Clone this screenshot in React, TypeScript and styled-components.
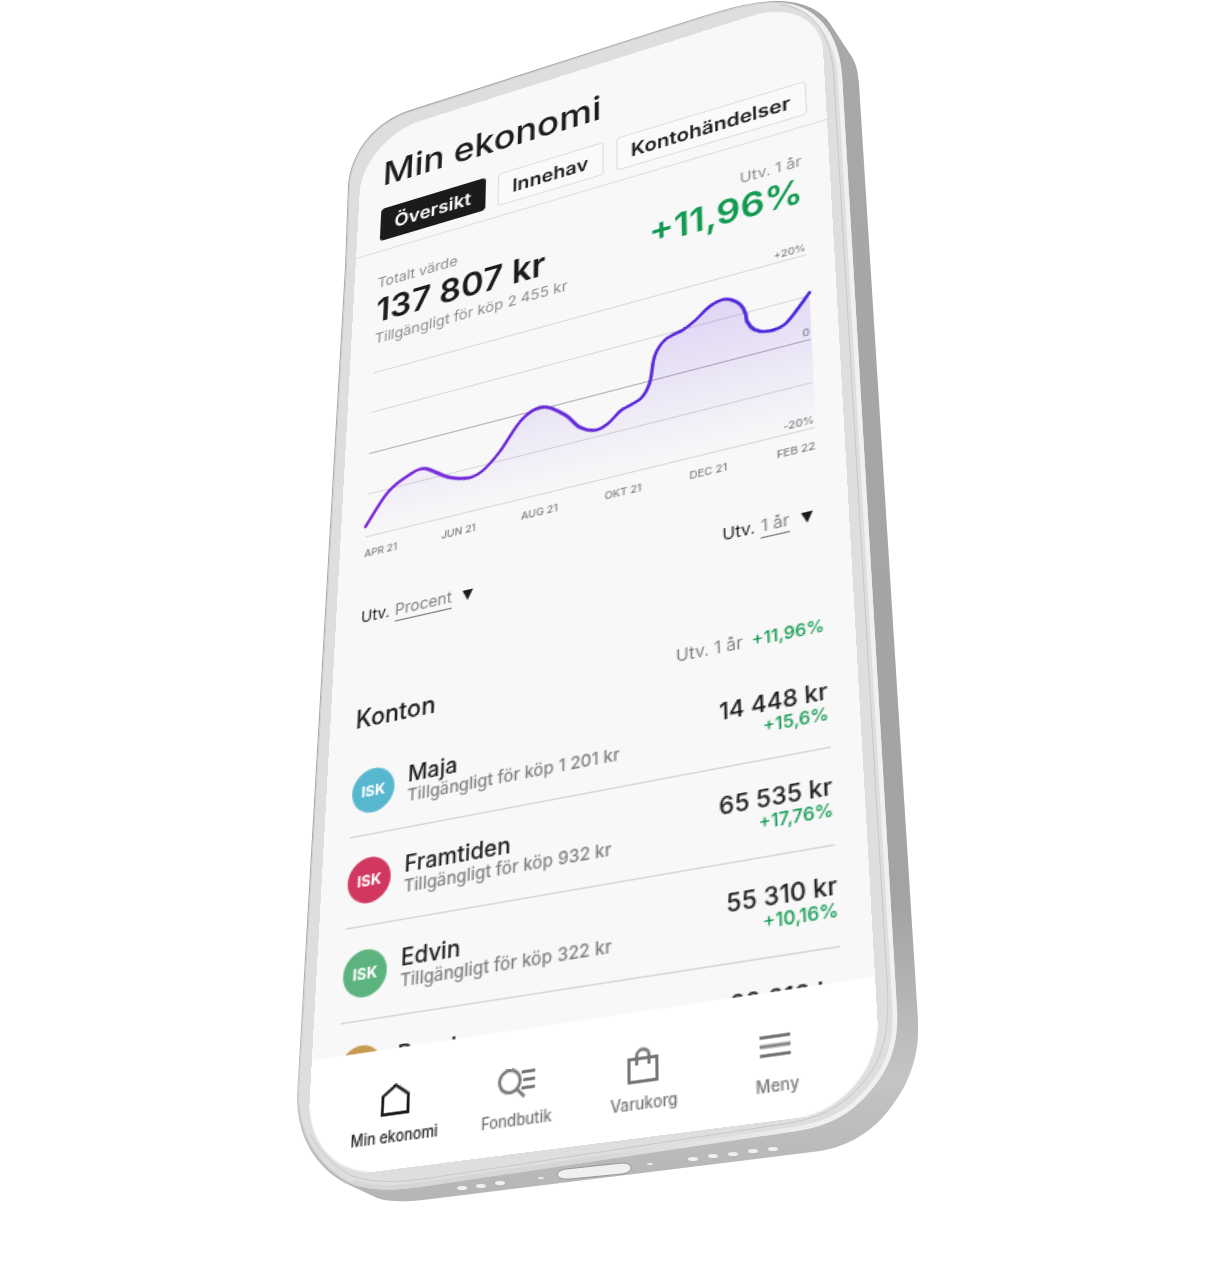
import React from 'react';
import styled, { createGlobalStyle } from 'styled-components';

const GlobalStyle = createGlobalStyle`
  * { box-sizing: border-box; }
  body {
    margin: 0;
    background: #ffffff;
    color: #1b1b1b;
    font-family: Inter, "Liberation Sans", sans-serif;
  }
  h1, h2, p, ul { margin: 0; padding: 0; }
  ul { list-style: none; }
  button, select { font: inherit; color: inherit; }
`;

const Page = styled.main`
  min-height: 100vh;
  display: flex;
  justify-content: center;
  align-items: flex-start;
  overflow: hidden;
`;

const Stage = styled.div`
  position: relative;
  flex: none;
  width: 622px;
  height: 1204px;
`;

const Body = styled.svg`
  display: block;
  width: 100%;
  height: 100%;
`;

/* The phone glass: a flat 375px layout seen in perspective. */
const Screen = styled.div`
  position: absolute;
  top: 0;
  left: 0;
  width: 375px;
  height: 816px;
  display: flex;
  flex-direction: column;
  overflow: hidden;
  border-radius: 52px;
  background: #f8f8f8;
  transform-origin: 0 0;
  transform: matrix3d(
    1.11138, -0.385248, 0, -0.00020662,
    -0.072519, 0.988077, 0, -0.00024398,
    0, 0, 1, 0,
    66.598, 139.156, 0, 1
  );
`;

const Header = styled.header`
  flex: none;
  padding: 24px 12px 9px 20px;
  border-bottom: 1px solid #dedede;
`;

const Title = styled.h1`
  font-size: 30px;
  line-height: 34px;
  font-weight: 500;
`;

const Tabs = styled.nav`
  display: flex;
  gap: 10px;
  margin-top: 16px;
`;

const Tab = styled.button<{ $active?: boolean }>`
  height: 30px;
  padding: 0 11px;
  border: 1px solid ${(p) => (p.$active ? '#1b1b1b' : '#dedede')};
  border-radius: 3px;
  background: ${(p) => (p.$active ? '#1b1b1b' : '#fafafa')};
  color: ${(p) => (p.$active ? '#ffffff' : '#1b1b1b')};
  font-size: 16px;
  line-height: 28px;
  font-weight: 600;
  white-space: nowrap;
`;

const Content = styled.div`
  flex: 1;
  min-height: 0;
  overflow: hidden;
  padding: 0 20px;
`;

const Summary = styled.section`
  display: flex;
  justify-content: space-between;
  padding-top: 22px;
`;

const Column = styled.div<{ $end?: boolean }>`
  display: flex;
  flex-direction: column;
  align-items: ${(p) => (p.$end ? 'flex-end' : 'flex-start')};
`;

const Caption = styled.p`
  font-size: 12px;
  line-height: 14px;
  color: #8c8c8c;
  white-space: nowrap;
`;

const Total = styled.p<{ $gain?: boolean }>`
  font-size: 28px;
  line-height: 36px;
  font-weight: 600;
  color: ${(p) => (p.$gain ? '#129a50' : '#1b1b1b')};
  white-space: nowrap;
`;

const Plot = styled.div`
  position: relative;
  display: grid;
  grid-template-rows: repeat(5, 1fr);
  height: 173px;
  margin-top: -12px;
`;

const GridLine = styled.div<{ $strong?: boolean }>`
  display: flex;
  justify-content: flex-end;
  align-items: flex-end;
  border-bottom: 1px solid ${(p) => (p.$strong ? '#b4b4b4' : '#d9d9d9')};
  font-size: 8px;
  line-height: 11px;
  font-weight: 500;
  color: #808080;
`;

const Curve = styled.svg`
  position: absolute;
  left: 0;
  bottom: 0;
  width: 100%;
  height: 138px;
  overflow: visible;
`;

const Months = styled.div`
  display: flex;
  justify-content: space-between;
  margin-top: 8px;
  font-size: 8px;
  line-height: 10px;
  font-weight: 500;
  color: #808080;
`;

const Filters = styled.div`
  display: flex;
  justify-content: space-between;
  margin-top: 38px;
  padding-right: 4px;
`;

const Filter = styled.label`
  display: flex;
  align-items: flex-start;
  gap: 4px;
  font-size: 12px;
  line-height: 16px;
`;

const Picker = styled.span`
  display: flex;
  align-items: center;
  gap: 8px;
  &::after {
    content: '';
    border: 4px solid transparent;
    border-top: 8px solid #1b1b1b;
    border-bottom: 0;
  }
`;

const Select = styled.select`
  appearance: none;
  field-sizing: content;
  height: 17px;
  margin: 0;
  padding: 0 0 1px;
  border: 0;
  border-bottom: 1px solid #808080;
  border-radius: 0;
  background: transparent;
  color: #808080;
  font-size: 12px;
  line-height: 15px;
`;

const Heading = styled.div`
  display: flex;
  justify-content: space-between;
  align-items: baseline;
  margin-top: 58px;
`;

const Subtitle = styled.h2`
  font-size: 18px;
  line-height: 24px;
  font-weight: 500;
`;

const Change = styled.p`
  display: flex;
  gap: 6px;
  font-size: 12px;
  line-height: 14px;
  color: #808080;
`;

const Gain = styled.span`
  font-size: 12px;
  line-height: 14px;
  font-weight: 500;
  color: #129a50;
`;

const Accounts = styled.ul`
  margin-top: 10px;
`;

const Account = styled.li`
  display: flex;
  align-items: center;
  height: 64px;
  border-bottom: 1px solid #d4d4d4;
`;

const Badge = styled.span<{ $color: string }>`
  display: grid;
  place-items: center;
  flex: none;
  width: 32px;
  height: 32px;
  margin-right: 10px;
  border-radius: 50%;
  background: ${(p) => p.$color};
  color: #ffffff;
  font-size: 11px;
  font-weight: 700;
`;

const Info = styled(Column)`
  flex: 1;
`;

const Strong = styled.p`
  font-size: 16px;
  line-height: 18px;
  font-weight: 500;
  white-space: nowrap;
`;

const Detail = styled(Caption)`
  color: #808080;
  font-weight: 500;
`;

const BottomBar = styled.nav`
  flex: none;
  display: grid;
  grid-template-columns: repeat(4, 1fr);
  height: 77px;
  padding: 21px 20px 0;
  background: #ffffff;
`;

const NavItem = styled.a<{ $active?: boolean }>`
  display: flex;
  flex-direction: column;
  align-items: center;
  gap: 5px;
  color: ${(p) => (p.$active ? '#1b1b1b' : '#767676')};
  font-size: 10px;
  line-height: 12px;
  font-weight: 500;
  text-decoration: none;
  svg {
    width: 26px;
    height: 24px;
    fill: none;
    stroke: currentColor;
    stroke-width: 2;
  }
`;

type Point = [number, number];

const series: Point[] = [
  [0, 129], [17, 105], [34, 95], [46, 93], [65, 105], [82, 110], [92, 107],
  [105, 95], [122, 73], [138, 67], [155, 78], [166, 91], [178, 97], [188, 94],
  [198, 86], [212, 81], [219, 70], [223, 49], [231, 38], [244, 34],
  [253, 29], [265, 20], [276, 18], [286, 25], [290, 34], [291, 41], [296, 49],
  [305, 53], [318, 51], [336, 31],
];

/* Catmull-Rom spline through the points, written as cubic segments. */
function smooth(points: Point[]): string {
  let d = `M${points[0][0]} ${points[0][1]}`;
  for (let i = 0; i < points.length - 1; i += 1) {
    const a = points[Math.max(i - 1, 0)];
    const b = points[i];
    const c = points[i + 1];
    const e = points[Math.min(i + 2, points.length - 1)];
    d += ` C${b[0] + (c[0] - a[0]) / 6} ${b[1] + (c[1] - a[1]) / 6}`;
    d += ` ${c[0] - (e[0] - b[0]) / 6} ${c[1] - (e[1] - b[1]) / 6} ${c[0]} ${c[1]}`;
  }
  return d;
}

const line = smooth(series);

const levels = [
  { label: '+20%' },
  { label: '' },
  { label: '0', strong: true },
  { label: '' },
  { label: '-20%' },
];

const months = ['APR 21', 'JUN 21', 'AUG 21', 'OKT 21', 'DEC 21', 'FEB 22'];

const accounts = [
  { name: 'Maja', detail: 'Tillgängligt för köp 1 201 kr', amount: '14 448 kr', gain: '+15,6%', color: '#57b7ce' },
  { name: 'Framtiden', detail: 'Tillgängligt för köp 932 kr', amount: '65 535 kr', gain: '+17,76%', color: '#d1375f' },
  { name: 'Edvin', detail: 'Tillgängligt för köp 322 kr', amount: '55 310 kr', gain: '+10,16%', color: '#5cb380' },
  { name: 'Pension', detail: '', amount: '22 212 kr', gain: '', color: '#c79a51' },
];

function Chart() {
  return (
    <>
      <Plot>
        {levels.map((l, i) => (
          <GridLine key={i} $strong={l.strong}>{l.label}</GridLine>
        ))}
        <Curve viewBox="0 0 335 138" preserveAspectRatio="none" aria-hidden="true">
          <defs>
            <linearGradient id="stroke" x1="0" x2="1" y1="0" y2="0">
              <stop offset="0" stopColor="#7d2bd8" />
              <stop offset="1" stopColor="#4a27da" />
            </linearGradient>
            <linearGradient id="fill" x1="0" x2="0" y1="0" y2="1">
              <stop offset="0" stopColor="#7a4be6" stopOpacity="0.2" />
              <stop offset="1" stopColor="#7a4be6" stopOpacity="0" />
            </linearGradient>
          </defs>
          <path d={`${line} L336 138 L0 138 Z`} fill="url(#fill)" />
          <path d={line} fill="none" stroke="url(#stroke)" strokeWidth="2.6" strokeLinecap="round" />
        </Curve>
      </Plot>
      <Months>
        {months.map((m) => <span key={m}>{m}</span>)}
      </Months>
    </>
  );
}

const face =
  'M346 267 L349 186 C352 150 377 122 411 111 L700 18 C735 7 758 2 775 2 C806 2 838 22 842 75 L897 1010 C899 1050 886 1076 862 1100 C842 1120 820 1128 790 1132 L420 1187 C396 1190 376 1192 352 1184 C322 1170 299 1140 298 1096 Z';

function PhoneBody() {
  return (
    <Body viewBox="296 0 622 1204" aria-hidden="true">
      <defs>
        <linearGradient id="side" gradientUnits="userSpaceOnUse" x1="600" y1="60" x2="640" y2="1200">
          <stop offset="0" stopColor="#a8a8a8" />
          <stop offset="0.75" stopColor="#a3a3a3" />
          <stop offset="0.9" stopColor="#c4c4c4" />
          <stop offset="1" stopColor="#b4b4b4" />
        </linearGradient>
        <linearGradient id="shine" gradientUnits="userSpaceOnUse" x1="330" y1="700" x2="520" y2="590">
          <stop offset="0" stopColor="#d6d6d6" />
          <stop offset="0.2" stopColor="#dcdcdc" />
          <stop offset="1" stopColor="#f0f0f0" />
        </linearGradient>
        <clipPath id="faceClip"><path d={face} /></clipPath>
        <clipPath id="lit"><path d="M800 60 L930 40 V1220 H340 V1150 H800 Z" /></clipPath>
      </defs>
      <path
        fill="url(#side)"
        d="M345 267 L348 186 C351 150 376 121 410 110 L700 17 C735 6 758 1 777 1 C803 1 823 10 833 28 L850 54 C856 62 858 72 859 84 L918 1020 C920 1054 910 1087 883 1117 C866 1136 844 1147 820 1151 L423 1200 C405 1202 388 1202 377 1198 L345 1183 C318 1168 297 1140 297 1096 Z"
      />
      <path d={face} fill="#dedede" />
      <g clipPath="url(#faceClip)">
        <path d={face} fill="none" stroke="#cfcfcf" strokeWidth="2" />
        <path
          d="M790 0 C815 8 838 32 842 75 L897 1010 C899 1050 886 1076 862 1100 C842 1120 820 1128 790 1132 L420 1187 C396 1190 376 1192 352 1184"
          fill="none"
          stroke="url(#shine)"
          strokeWidth="9"
        />
      </g>
      <path
        fill="none"
        stroke="#c8c8c8"
        strokeWidth="1"
        d="M780 5 C812 8 832 32 834 80 L887 980 C891 1040 880 1064 860 1086 C842 1106 822 1117 790 1123 L430 1178 C400 1182 376 1184 352 1176 C334 1167 320 1152 310 1134"
      />
      <g fill="#f0f0f0">
        <ellipse cx="462" cy="1188" rx="5" ry="2" />
        <ellipse cx="481" cy="1186" rx="5" ry="2" />
        <ellipse cx="500" cy="1183" rx="5" ry="2" />
        <ellipse cx="541" cy="1178" rx="3" ry="1" />
        <path stroke="#989898" d="M566 1169 L622 1163 C634 1163 634 1172 622 1174 L570 1179 C554 1180 554 1171 566 1169 Z" />
        <ellipse cx="650" cy="1164" rx="3" ry="1" />
        <ellipse cx="693" cy="1159" rx="5" ry="2" />
        <ellipse cx="713" cy="1156" rx="5" ry="2" />
        <ellipse cx="733" cy="1154" rx="5" ry="2" />
        <ellipse cx="753" cy="1151" rx="5" ry="2" />
        <ellipse cx="773" cy="1149" rx="5" ry="2" />
      </g>
    </Body>
  );
}

export default function App() {
  return (
    <>
      <GlobalStyle />
      <Page>
        <Stage>
          <PhoneBody />
          <Screen>
            <Header>
              <Title>Min ekonomi</Title>
              <Tabs>
                <Tab $active>Översikt</Tab>
                <Tab>Innehav</Tab>
                <Tab>Kontohändelser</Tab>
              </Tabs>
            </Header>
            <Content>
              <Summary>
                <Column>
                  <Caption>Totalt värde</Caption>
                  <Total>137 807 kr</Total>
                  <Caption>Tillgängligt för köp 2 455 kr</Caption>
                </Column>
                <Column $end>
                  <Caption>Utv. 1 år</Caption>
                  <Total $gain>+11,96%</Total>
                </Column>
              </Summary>
              <Chart />
              <Filters>
                <Filter>
                  Utv.
                  <Picker>
                    <Select defaultValue="Procent"><option>Procent</option></Select>
                  </Picker>
                </Filter>
                <Filter>
                  Utv.
                  <Picker>
                    <Select defaultValue="1 år"><option>1 år</option></Select>
                  </Picker>
                </Filter>
              </Filters>
              <Heading>
                <Subtitle>Konton</Subtitle>
                <Change>Utv. 1 år <Gain>+11,96%</Gain></Change>
              </Heading>
              <Accounts>
                {accounts.map((a) => (
                  <Account key={a.name}>
                    <Badge $color={a.color}>{a.detail && 'ISK'}</Badge>
                    <Info>
                      <Strong>{a.name}</Strong>
                      <Detail>{a.detail || '\u00a0'}</Detail>
                    </Info>
                    <Column $end>
                      <Strong>{a.amount}</Strong>
                      <Gain>{a.gain || '\u00a0'}</Gain>
                    </Column>
                  </Account>
                ))}
              </Accounts>
            </Content>
            <BottomBar>
              <NavItem href="#ekonomi" $active>
                <svg viewBox="0 0 26 24"><path d="M4 9.5 L13 3 L22 9.5 V21 H4 Z" /></svg>
                Min ekonomi
              </NavItem>
              <NavItem href="#fondbutik">
                <svg viewBox="0 0 26 24"><circle cx="8" cy="11" r="7" /><path d="M12.5 16 L18 21.5 M16 6 H25 M17 11 H25 M16 16 H25" /></svg>
                Fondbutik
              </NavItem>
              <NavItem href="#varukorg">
                <svg viewBox="0 0 26 24"><path d="M4 8 H22 V22 H4 Z M9 12 V6.5 A4 4 0 0 1 17 6.5 V12" /></svg>
                Varukorg
              </NavItem>
              <NavItem href="#meny">
                <svg viewBox="0 0 26 24"><path d="M3 6 H22 M3 11.5 H22 M3 17 H22" /></svg>
                Meny
              </NavItem>
            </BottomBar>
          </Screen>
        </Stage>
      </Page>
    </>
  );
}
